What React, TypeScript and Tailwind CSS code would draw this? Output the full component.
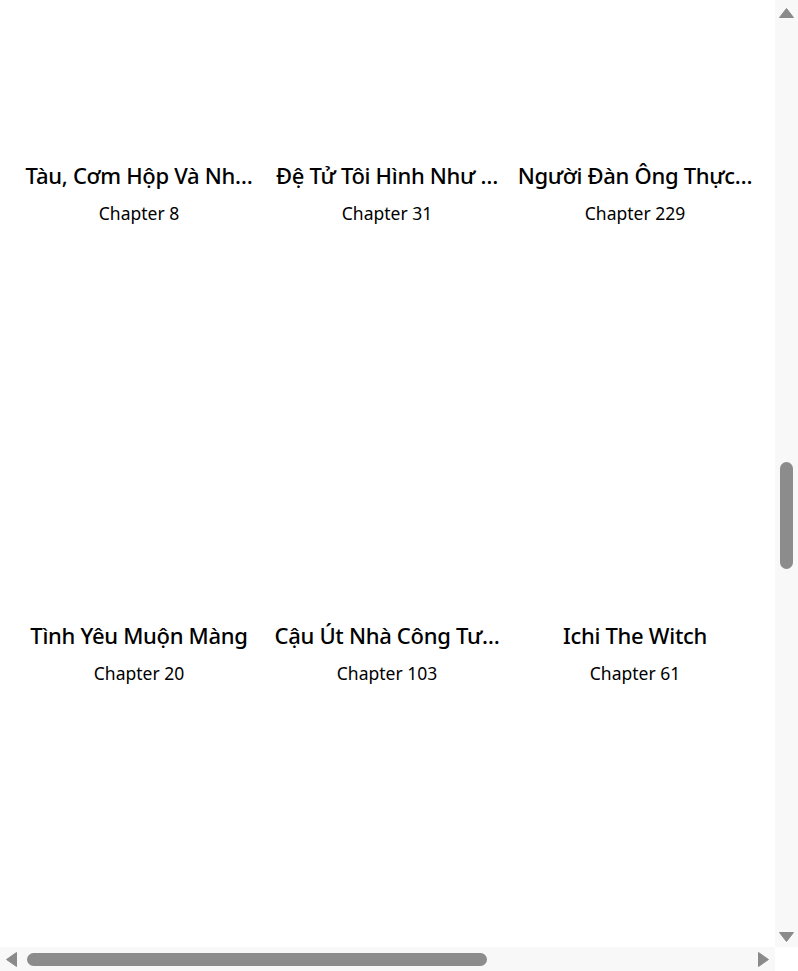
import { useLayoutEffect, useRef } from "react";

type Manga = { title: string; chapter: string };

const visible: Manga[] = [
  { title: "Tàu, Cơm Hộp Và Nh…", chapter: "Chapter 8" },
  { title: "Đệ Tử Tôi Hình Như …", chapter: "Chapter 31" },
  { title: "Người Đàn Ông Thực…", chapter: "Chapter 229" },
  { title: "Tình Yêu Muộn Màng", chapter: "Chapter 20" },
  { title: "Cậu Út Nhà Công Tư…", chapter: "Chapter 103" },
  { title: "Ichi The Witch", chapter: "Chapter 61" },
];

const ROWS = 18;
const FIRST_VISIBLE_ROW = 8;

function buildList(): Manga[] {
  const list: Manga[] = [];
  for (let r = 0; r < ROWS; r++) {
    for (let c = 0; c < 3; c++) {
      const vi = (r - FIRST_VISIBLE_ROW) * 3 + c;
      if (vi >= 0 && vi < visible.length) list.push(visible[vi]);
      else list.push({ title: "", chapter: "" });
    }
  }
  return list;
}

function Card({ m }: { m: Manga }) {
  return (
    <div className="flex flex-col items-center">
      <div className="h-[384px] w-full" />
      <div className="flex w-full justify-center text-[22px] leading-8 font-medium tracking-[-0.3px] text-black">
        <span className="whitespace-nowrap">{m.title || "\u00a0"}</span>
      </div>
      <div className="mt-[10px] text-center text-[17.5px] leading-6 font-normal text-black">
        {m.chapter || "\u00a0"}
      </div>
    </div>
  );
}

function Arrow({ dir }: { dir: "up" | "down" | "left" | "right" }) {
  if (dir === "up" || dir === "down") {
    return (
      <svg width="15" height="10" viewBox="0 0 15 10" className="shrink-0">
        <polygon
          points={dir === "up" ? "7.5,0.5 14.5,9.5 0.5,9.5" : "0.5,0.5 14.5,0.5 7.5,9.5"}
          fill="#8a8a8a"
          stroke="#8a8a8a"
          strokeWidth="1"
          strokeLinejoin="round"
        />
      </svg>
    );
  }
  return (
    <svg width="11" height="15" viewBox="0 0 11 15" className="shrink-0">
      <polygon
        points={dir === "left" ? "0.5,7.5 10.5,0.5 10.5,14.5" : "0.5,0.5 10.5,7.5 0.5,14.5"}
        fill="#8a8a8a"
        stroke="#8a8a8a"
        strokeWidth="1"
        strokeLinejoin="round"
      />
    </svg>
  );
}

export default function App() {
  const ref = useRef<HTMLDivElement>(null);
  useLayoutEffect(() => {
    if (ref.current) ref.current.scrollTop = 3990;
  }, []);
  const list = buildList();
  return (
    <div
      className="flex h-[971px] w-[798px] flex-col overflow-hidden bg-white"
      style={{ fontFamily: "'Noto Sans', 'Open Sans', sans-serif" }}
    >
      <div className="flex min-h-0 flex-1">
        <div ref={ref} className="min-w-0 flex-1 overflow-hidden">
          <div className="pt-[85px] pl-[23px]">
            <div className="grid w-[728px] grid-cols-3 gap-x-4 gap-y-[10px]">
              {list.map((m, i) => (
                <Card key={i} m={m} />
              ))}
            </div>
          </div>
        </div>
        <div className="flex w-[23px] shrink-0 flex-col items-center bg-[#f8f8f8] pt-[8px] pb-[5px]">
          <Arrow dir="up" />
          <div className="flex w-full flex-1 flex-col items-center">
            <div className="mt-[444px] h-[107px] w-[13px] rounded-full bg-[#8c8c8c]" />
          </div>
          <Arrow dir="down" />
        </div>
      </div>
      <div className="flex h-[24px] shrink-0">
        <div className="flex flex-1 items-center bg-[#f8f8f8] pl-[6px] pr-[6px]">
          <Arrow dir="left" />
          <div className="flex h-full flex-1 items-center">
            <div className="ml-[10px] h-[13px] w-[460px] rounded-full bg-[#8c8c8c]" />
          </div>
          <Arrow dir="right" />
        </div>
        <div className="w-[23px] bg-white" />
      </div>
    </div>
  );
}
